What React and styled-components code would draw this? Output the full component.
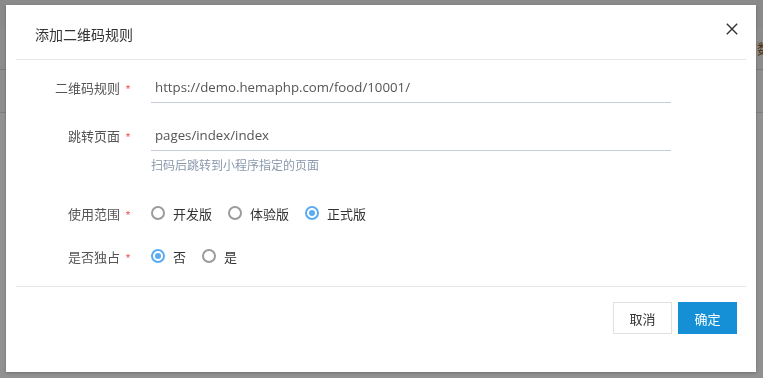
import React from 'react'
import styled, { createGlobalStyle } from 'styled-components'

const GlobalStyle = createGlobalStyle`
  html, body {
    margin: 0;
    padding: 0;
  }
  body {
    width: 763px;
    height: 378px;
    overflow: hidden;
    background: #fff;
    font-family: "Open Sans", "Noto Sans CJK SC", sans-serif;
  }
`

const CJK = '"Noto Sans CJK SC", "Open Sans", sans-serif'

/* page that sits behind the mask */
const Page = styled.div`
  display: flex;
  flex-direction: column;
  width: 763px;
  height: 378px;
`

const PageTop = styled.div`
  height: 27px;
  background: #f2f2f2;
`

const PageBar = styled.div`
  display: flex;
  align-items: center;
  justify-content: flex-end;
  height: 42px;
  background: #f7f7f7;
  border-bottom: 1px solid #d6d6d6;
  font: 14px ${CJK};
  color: #8a5a2a;
  overflow: hidden;
`

const PageBarText = styled.span`
  margin-right: -8px;
`

const PageRow = styled.div`
  height: 42px;
  background: #fafafa;
  border-bottom: 1px solid #dcdcdc;
`

const Mask = styled.div`
  position: fixed;
  inset: 0;
  background: rgba(0, 0, 0, 0.43);
  display: flex;
  align-items: flex-start;
`

const Dialog = styled.div`
  width: 750px;
  margin: 5px 0 0 6px;
  background: #fff;
  box-shadow: 0 1px 3px rgba(0, 0, 0, 0.25);
`

const Header = styled.div`
  display: flex;
  align-items: flex-start;
  justify-content: space-between;
  box-sizing: border-box;
  height: 55px;
  margin: 0 10px;
  padding: 18px 8px 0 19px;
  border-bottom: 1px solid #e6e6e6;
`

const Title = styled.div`
  font: 14px/22px ${CJK};
  color: #333;
`

const CloseButton = styled.button`
  display: block;
  width: 12px;
  height: 12px;
  padding: 0;
  margin-top: 0;
  border: none;
  background: none;
  cursor: pointer;
`

const Body = styled.div`
  padding: 11px 10px 14px;
`

const FormItem = styled.div`
  display: flex;
  align-items: flex-start;
  margin-bottom: ${p => p.$mb || 0}px;
`

const Label = styled.div`
  display: flex;
  align-items: center;
  justify-content: flex-end;
  width: 115px;
  height: 32px;
  flex-shrink: 0;
  margin-right: 20px;
  font: 13px ${CJK};
  color: #555;
`

const Star = styled.span`
  margin: 5px 0 0 5px;
  color: #f56c6c;
`

const Control = styled.div`
  display: flex;
  flex-direction: column;
`

const Input = styled.input`
  box-sizing: border-box;
  width: 520px;
  height: 32px;
  padding: 0 4px;
  border: none;
  border-bottom: 1px solid #c6cdd9;
  outline: none;
  background: transparent;
  font: 13.25px "Open Sans", "Noto Sans CJK SC", sans-serif;
  color: #555;
`

const Hint = styled.div`
  margin-top: 5px;
  font: 12px/18px ${CJK};
  color: #8a99ad;
`

const RadioGroup = styled.div`
  display: flex;
  align-items: center;
  height: 32px;
`

const RadioOption = styled.label`
  display: inline-flex;
  align-items: center;
  gap: 8px;
  margin-right: 16px;
  font: 13px ${CJK};
  color: #333;
  cursor: pointer;
`

const RadioCircle = styled.span`
  display: flex;
  align-items: center;
  justify-content: center;
  box-sizing: border-box;
  width: 14px;
  height: 14px;
  border-radius: 50%;
  border: 2px solid ${p => (p.$checked ? '#5aacf2' : '#9b9b9b')};

  &::after {
    content: '';
    display: ${p => (p.$checked ? 'block' : 'none')};
    width: 6px;
    height: 6px;
    border-radius: 50%;
    background: #5aacf2;
  }
`

const Footer = styled.div`
  display: flex;
  justify-content: flex-end;
  gap: 6px;
  margin: 0 10px;
  padding: 15px 9px 38px;
  border-top: 1px solid #e6e6e6;
`

const Button = styled.button`
  box-sizing: border-box;
  width: 59px;
  height: 32px;
  padding: 0;
  border: 1px solid ${p => (p.$primary ? '#1590d6' : '#e0e0e0')};
  background: ${p => (p.$primary ? '#1590d6' : '#fff')};
  color: ${p => (p.$primary ? '#fff' : '#333')};
  font: 13px ${CJK};
  cursor: pointer;
`

const Radio = ({ checked, children }) => (
  <RadioOption>
    <RadioCircle $checked={checked} />
    {children}
  </RadioOption>
)

const Field = ({ label, mb, children }) => (
  <FormItem $mb={mb}>
    <Label>
      {label}
      <Star>*</Star>
    </Label>
    <Control>{children}</Control>
  </FormItem>
)

export default function App() {
  return (
    <>
      <GlobalStyle />
      <Page>
        <PageTop />
        <PageBar>
          <PageBarText>数</PageBarText>
        </PageBar>
        <PageRow />
      </Page>
      <Mask>
        <Dialog>
          <Header>
            <Title>添加二维码规则</Title>
            <CloseButton aria-label="关闭">
              <svg width="12" height="12" viewBox="0 0 12 12">
                <path d="M0.8 0.8L11.2 11.2M11.2 0.8L0.8 11.2" stroke="#333" strokeWidth="1.4" fill="none" />
              </svg>
            </CloseButton>
          </Header>
          <Body>
            <Field label="二维码规则" mb={16}>
              <Input defaultValue="https://demo.hemaphp.com/food/10001/" />
            </Field>
            <Field label="跳转页面" mb={23}>
              <Input defaultValue="pages/index/index" />
              <Hint>扫码后跳转到小程序指定的页面</Hint>
            </Field>
            <Field label="使用范围" mb={11}>
              <RadioGroup>
                <Radio>开发版</Radio>
                <Radio>体验版</Radio>
                <Radio checked>正式版</Radio>
              </RadioGroup>
            </Field>
            <Field label="是否独占">
              <RadioGroup>
                <Radio checked>否</Radio>
                <Radio>是</Radio>
              </RadioGroup>
            </Field>
          </Body>
          <Footer>
            <Button>取消</Button>
            <Button $primary>确定</Button>
          </Footer>
        </Dialog>
      </Mask>
    </>
  )
}
